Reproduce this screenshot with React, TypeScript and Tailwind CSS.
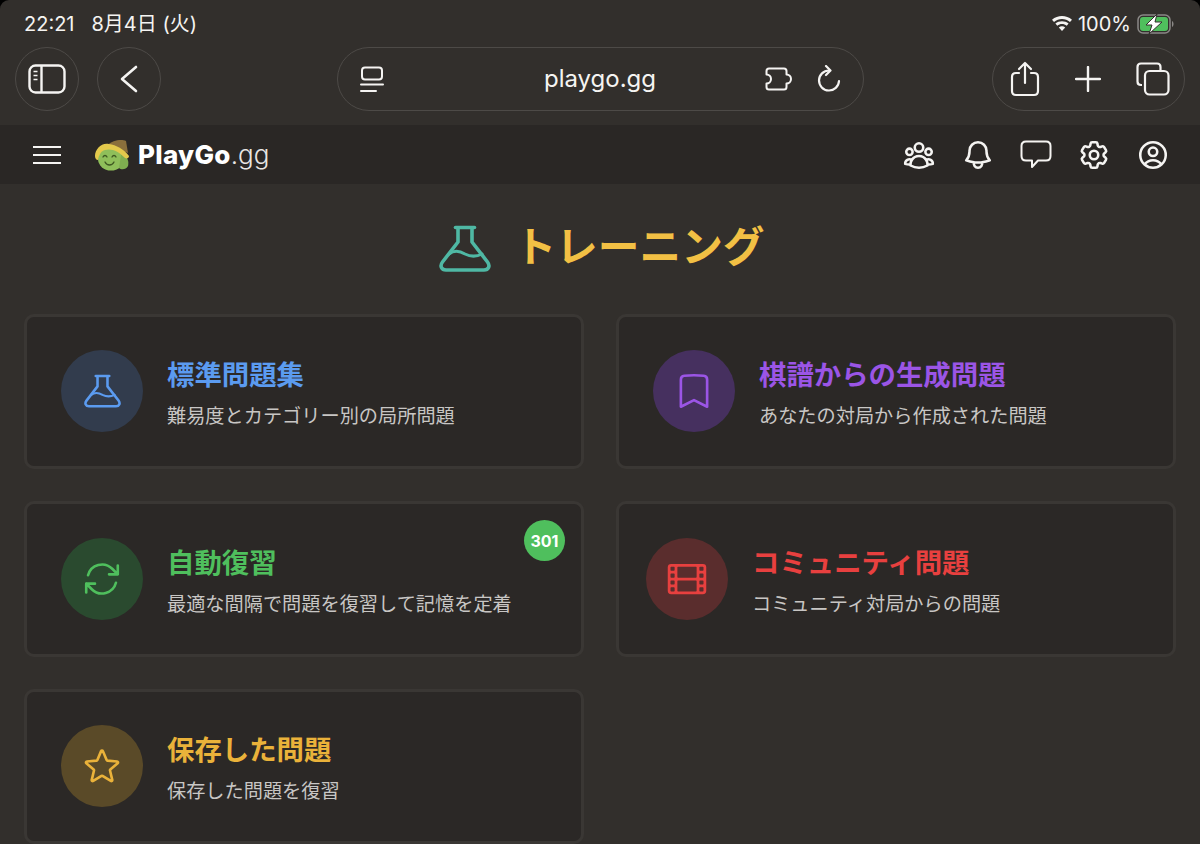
import React from "react";
import {
  HiOutlineArrowPath,
  HiOutlineBell,
  HiOutlineBookmark,
  HiOutlineCog6Tooth,
  HiOutlineFilm,
  HiOutlineStar,
  HiOutlineUserCircle,
  HiOutlineUserGroup,
} from "react-icons/hi2";

const Flask = ({ className }: { className: string }) => (
  <svg viewBox="0 0 52 47" fill="none" stroke="currentColor" strokeLinecap="round" strokeLinejoin="round" className={className}>
    <path d="M19 3V17L3.5 37C0.5 41 2.5 45 7 45H45C49.5 45 51.5 41 48.5 37L33 17V3" strokeWidth="3.6" />
    <path d="M16.5 2.5H35.5" strokeWidth="3.6" />
    <path d="M10 29C15 25 21 26 26 29C32 32 37 32 43 29" strokeWidth="3" />
  </svg>
);

const Logo = () => (
  <svg viewBox="0 0 36 32" className="h-8 w-9">
    <path d="M14 6C18 1 28 0 32 2L34 14Z" fill="#8a6f3c" />
    <ellipse cx="17" cy="20" rx="13" ry="11.5" fill="#8fbf5a" />
    <path d="M27 16C34 16 35 23 34 27C32 31 27 31 25 29Z" fill="#7fae50" />
    <path d="M1 17C1 10 8 3 15 5C22 6 30 10 35 17C35 19 33 20 31 19C25 12 17 9 11 11C7 12 5 16 4 21C2 21 1 19 1 17Z" fill="#e3c94c" />
    <path d="M9 18C10 16 12 16 13 18M18 18C19 16 21 16 22 18M11 23C13 27 18 27 20 23" fill="none" stroke="#3f5a22" strokeWidth="1.3" strokeLinecap="round" />
  </svg>
);

const cards = [
  { title: "標準問題集", sub: "難易度とカテゴリー別の局所問題", text: "text-[#5b9bf0]", circle: "bg-[#323c4d]", pad: "pl-[34px]", icon: <Flask className="h-[34px] w-[37px]" /> },
  { title: "棋譜からの生成問題", sub: "あなたの対局から作成された問題", text: "text-[#9b55e6]", circle: "bg-[#46305f]", pad: "pl-[34px]", icon: <HiOutlineBookmark className="h-[42px] w-[42px]" /> },
  { title: "自動復習", sub: "最適な間隔で問題を復習して記憶を定着", text: "text-[#4fbf5d]", circle: "bg-[#2a4a2f]", pad: "pl-[34px]", badge: "301", icon: <HiOutlineArrowPath className="h-[42px] w-[42px]" /> },
  { title: "コミュニティ問題", sub: "コミュニティ対局からの問題", text: "text-[#e8403f]", circle: "bg-[#5a2d2d]", pad: "pl-[27px]", icon: <HiOutlineFilm className="h-[44px] w-[44px]" /> },
  { title: "保存した問題", sub: "保存した問題を復習", text: "text-[#eab23a]", circle: "bg-[#5a4a28]", pad: "pl-[34px]", icon: <HiOutlineStar className="h-[42px] w-[42px]" /> },
];

export default function App() {
  return (
    <div className="h-[844px] overflow-hidden bg-black font-['Inter','Noto_Sans_CJK_JP',sans-serif]">
      <div className="h-full rounded-t-[9px] bg-[#322f2c] text-[#f5f4f2]">
        <div className="flex h-[47px] items-center justify-between pl-6 pr-[25px] text-[20px]">
          <div className="flex gap-[17px]">
            <span>22:21</span>
            <span>8月4日 (火)</span>
          </div>
          <div className="flex items-center gap-[6px]">
            <svg viewBox="0 0 20 15" className="h-[15px] w-[20px]" fill="currentColor">
              <path d="M10 15L6.8 11.4C8.6 9.8 11.4 9.8 13.2 11.4Z" />
              <path d="M5.3 9.7L3.4 7.6C7.1 4.4 12.9 4.4 16.6 7.6L14.7 9.7C12 7.4 8 7.4 5.3 9.7Z" />
              <path d="M2 6L0 3.8C5.7-1.2 14.3-1.2 20 3.8L18 6C13.4 2 6.6 2 2 6Z" />
            </svg>
            <span>100%</span>
            <svg viewBox="0 0 38 20" className="h-[20px] w-[38px]">
              <rect x="1" y="1" width="32" height="18" rx="5" fill="none" stroke="#8a8886" strokeWidth="1.5" />
              <rect x="3" y="3" width="28" height="14" rx="3" fill="#4fbf5d" />
              <path d="M35 7C37 8 37 12 35 13Z" fill="#8a8886" />
              <path d="M20 0L9 11H15L12 20L25 8H18Z" fill="#fff" stroke="#322f2c" strokeWidth="1" />
            </svg>
          </div>
        </div>

        <div className="flex h-[64px] items-center px-[15px]">
          <div className="flex flex-1 gap-[18px]">
            <button className="flex h-[64px] w-[64px] items-center justify-center rounded-full border border-[#4d4a47]">
              <svg viewBox="0 0 38 30" fill="none" stroke="currentColor" strokeWidth="2.4" className="h-[30px] w-[38px]">
                <rect x="1.5" y="1.5" width="35" height="27" rx="6" />
                <path d="M13.5 1.5V28.5" />
                <path d="M5.5 7.5H9.5M5.5 11.5H9.5M5.5 15.5H9.5" strokeWidth="1.6" />
              </svg>
            </button>
            <button className="flex h-[64px] w-[64px] items-center justify-center rounded-full border border-[#4d4a47]">
              <svg viewBox="0 0 18 28" fill="none" stroke="currentColor" strokeWidth="2.6" strokeLinecap="round" strokeLinejoin="round" className="h-[28px] w-[18px]">
                <path d="M16 2L2 14L16 26" />
              </svg>
            </button>
          </div>

          <div className="flex h-[64px] w-[527px] items-center justify-between rounded-full border border-[#4d4a47] px-[22px]">
            <svg viewBox="0 0 24 27" fill="none" stroke="currentColor" strokeWidth="2" strokeLinecap="round" className="h-[27px] w-[24px]">
              <rect x="2" y="1.5" width="20" height="12" rx="3" />
              <path d="M1 18.5H23M1 25H16" />
            </svg>
            <span className="ml-[52px] text-[24px] leading-none">playgo.gg</span>
            <div className="flex items-center gap-[20px]">
              <svg viewBox="0 0 32 24" fill="none" stroke="currentColor" strokeWidth="2" strokeLinejoin="round" className="h-[24px] w-[32px]">
                <path d="M4 1.5H19C20.5 1.5 21.5 2.5 21.5 4V7.5A4.5 4.5 0 1 1 21.5 16.5V20C21.5 21.5 20.5 22.5 19 22.5H4C2.5 22.5 1.5 21.5 1.5 20V16.5A4.5 4.5 0 1 0 1.5 7.5V4C1.5 2.5 2.5 1.5 4 1.5Z" />
              </svg>
              <svg viewBox="0 0 24 28" fill="none" stroke="currentColor" strokeWidth="2.2" strokeLinecap="round" strokeLinejoin="round" className="h-[28px] w-[24px]">
                <path d="M12 5.5A10 10 0 1 0 22 16" />
                <path d="M9 1L13.5 5.5L9 10" />
              </svg>
            </div>
          </div>

          <div className="flex flex-1 justify-end">
            <div className="flex h-[64px] w-[193px] items-center justify-between rounded-full border border-[#4d4a47] pl-[17px] pr-[14px]">
              <svg viewBox="0 0 30 36" fill="none" stroke="currentColor" strokeWidth="2.2" strokeLinecap="round" strokeLinejoin="round" className="h-[36px] w-[30px]">
                <path d="M9 12H6C3.5 12 2 13.5 2 16V30C2 32.5 3.5 34 6 34H24C26.5 34 28 32.5 28 30V16C28 13.5 26.5 12 24 12H21" />
                <path d="M15 22V2M9 8L15 2L21 8" />
              </svg>
              <svg viewBox="0 0 26 26" fill="none" stroke="currentColor" strokeWidth="2.4" strokeLinecap="round" className="h-[26px] w-[26px]">
                <path d="M13 1V25M1 13H25" />
              </svg>
              <svg viewBox="0 0 34 34" fill="none" stroke="currentColor" strokeWidth="2.2" className="h-[34px] w-[34px]">
                <path d="M6 23H5C2.8 23 1.5 21.5 1.5 19.5V5C1.5 3 3 1.5 5 1.5H21C23 1.5 24.5 3 24.5 5V9" />
                <rect x="9" y="9" width="23.5" height="23.5" rx="4.5" />
              </svg>
            </div>
          </div>
        </div>

        <div className="mt-[14px] flex h-[59px] items-center justify-between bg-[#2a2725] pl-[33px] pr-[30px]">
          <div className="flex items-center">
            <svg viewBox="0 0 28 18" fill="none" stroke="currentColor" strokeWidth="2" className="h-[18px] w-[28px]">
              <path d="M0 1H28M0 9H28M0 17H28" />
            </svg>
            <div className="ml-[33px]"><Logo /></div>
            <span className="ml-[8px] text-[26px] font-extrabold tracking-[0.3px] text-white">PlayGo</span>
            <span className="text-[26px] font-light text-[#e8e6e4]">.gg</span>
          </div>
          <div className="flex items-center gap-[25px]">
            <HiOutlineUserGroup strokeWidth={1.8} className="h-[34px] w-[34px]" />
            <HiOutlineBell strokeWidth={1.8} className="h-[34px] w-[34px]" />
            <svg viewBox="0 0 32 29" fill="none" stroke="currentColor" strokeWidth="2" strokeLinejoin="round" className="h-[29px] w-[32px]">
              <path d="M6 1.5H26C29 1.5 30.5 3 30.5 6V16C30.5 19 29 20.5 26 20.5H18L12 27V20.5H6C3 20.5 1.5 19 1.5 16V6C1.5 3 3 1.5 6 1.5Z" />
            </svg>
            <HiOutlineCog6Tooth strokeWidth={1.8} className="h-[34px] w-[34px]" />
            <HiOutlineUserCircle strokeWidth={1.8} className="h-[34px] w-[34px]" />
          </div>
        </div>

        <div className="flex h-[129.5px] items-center justify-center gap-[23px] pb-[1px] pl-[4px]">
          <Flask className="h-[47px] w-[52px] text-[#4fb8a4]" />
          <h1 className="text-[41.7px] font-semibold leading-none text-[#f2c044]">トレーニング</h1>
        </div>

        <div className="grid grid-cols-2 gap-x-8 gap-y-8 px-6">
          {cards.map((c) => (
            <div key={c.title} className={"relative flex h-[155.5px] items-center gap-[24px] rounded-[10px] border-[3px] border-[#3a3734] bg-[#2b2826] " + c.pad}>
              <div className={"flex h-[82px] w-[82px] shrink-0 items-center justify-center rounded-full " + c.circle + " " + c.text}>
                {c.icon}
              </div>
              <div className="pt-[3px]">
                <h2 className={"text-[27.4px] font-semibold leading-[40px] " + c.text}>{c.title}</h2>
                <p className="mt-[7px] text-[19.2px] leading-[28px] text-[#c8c6c4]">{c.sub}</p>
              </div>
              {c.badge && (
                <span className="absolute right-[16px] top-[16px] flex h-[41px] w-[41px] items-center justify-center rounded-full bg-[#4fbf5d] text-[16px] font-bold text-white">
                  {c.badge}
                </span>
              )}
            </div>
          ))}
        </div>
      </div>
    </div>
  );
}
